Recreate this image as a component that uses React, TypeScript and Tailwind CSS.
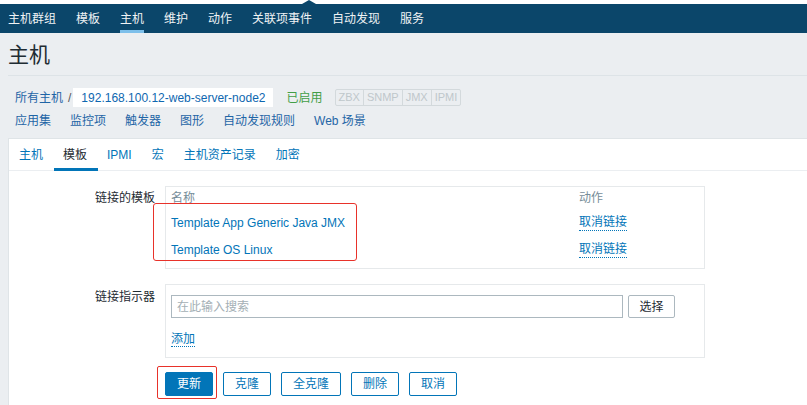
import React from "react";

const navItems = ["主机群组", "模板", "主机", "维护", "动作", "关联项事件", "自动发现", "服务"];
const subLinks = ["应用集", "监控项", "触发器", "图形", "自动发现规则", "Web 场景"];
const tabs = ["主机", "模板", "IPMI", "宏", "主机资产记录", "加密"];
const tags = ["ZBX", "SNMP", "JMX", "IPMI"];
const templates = ["Template App Generic Java JMX", "Template OS Linux"];

export default function App() {
  return (
    <div className="relative h-[405px] w-full overflow-hidden bg-[#ebeef1] text-[12px] text-[#1f2c33] font-['Liberation_Sans','Noto_Sans_CJK_SC',sans-serif]">
      {/* top strip + nav */}
      <div className="h-[4px] bg-white" />
      <svg className="absolute left-[302px] top-0" width="14" height="4" viewBox="0 0 14 4">
        <polygon points="0,4 7,0 14,4" fill="#0b466a" />
      </svg>
      <div className="flex h-[29px] gap-[20px] bg-[#0b466a] px-[8px] text-[#f0f3f5]">
        {navItems.map((n) => (
          <div key={n} className="relative flex h-full items-center">
            {n}
            {n === "主机" && <div className="absolute bottom-0 left-0 h-[3px] w-full bg-[#7dbfea]" />}
          </div>
        ))}
      </div>

      <div className="pl-[8px]">
        {/* title */}
        <div className="h-[43px] border-b border-[#dde3e7] pt-[10px]">
          <h1 className="text-[21px] leading-[24px] text-[#1f2c33]">主机</h1>
        </div>

        {/* breadcrumb */}
        <div className="px-[7px] pt-[12px] pb-[8px]">
          <div className="flex h-[19px] items-center">
            <span className="text-[#1f65a6]">所有主机</span>
            <span className="ml-[5px] mr-[2px] text-[#555]">/</span>
            <span className="flex h-[19px] items-center bg-white px-[8px] text-[#0e67b0]">
              192.168.100.12-web-server-node2
            </span>
            <span className="ml-[13px] text-[#429e47]">已启用</span>
            <div className="ml-[12px] flex h-[17px] rounded-[2px] border border-[#d3d9dc] text-[11px] text-[#bfc7cb]">
              {tags.map((t, i) => (
                <span key={t} className={"flex items-center px-[3px] " + (i > 0 ? "border-l border-[#d3d9dc]" : "")}>
                  {t}
                </span>
              ))}
            </div>
          </div>
          <div className="mt-[5px] flex h-[18px] items-center gap-[19px] text-[#1f65a6]">
            {subLinks.map((s) => (
              <span key={s}>{s}</span>
            ))}
          </div>
        </div>

        {/* card */}
        <div className="h-[300px] border border-r-0 border-[#dfe4e7] bg-white">
          <div className="flex h-[32px] border-b border-[#ebeef1]">
            {tabs.map((t) => (
              <div
                key={t}
                className={"relative flex h-full items-center px-[10px] " + (t === "模板" ? "text-[#1f2c33]" : "text-[#0275b8]")}
              >
                {t}
                {t === "模板" && <div className="absolute bottom-[-1px] left-[1px] right-[-1px] h-[3px] bg-[#0275b8]" />}
              </div>
            ))}
          </div>

          <div className="pt-[15px]">
            {/* linked templates */}
            <div className="flex">
              <div className="w-[146px] pt-[5px] text-right leading-[14px]">链接的模板</div>
              <div className="ml-[10px] w-[540px] border border-[#e6e9eb] px-[5px] pb-[5px]">
                <div className="flex h-[22px] items-center text-[#768d99]">
                  <span className="w-[408px]">名称</span>
                  <span>动作</span>
                </div>
                {templates.map((t) => (
                  <div key={t} className="flex h-[27px] items-center">
                    <span className="w-[408px] text-[#0275b8]">{t}</span>
                    <span className="border-b border-dotted border-[#0275b8] leading-[15px] text-[#0275b8]">取消链接</span>
                  </div>
                ))}
              </div>
            </div>

            {/* link indicator */}
            <div className="mt-[15px] flex">
              <div className="w-[146px] pt-[6px] text-right leading-[14px]">链接指示器</div>
              <div className="ml-[10px] h-[74px] w-[540px] border border-[#e6e9eb] px-[5px] pt-[10px]">
                <div className="flex items-center">
                  <div className="flex h-[23px] w-[452px] items-center border border-[#acb8bf] px-[5px] text-[#a4afb5]">
                    在此输入搜索
                  </div>
                  <button className="ml-[5px] h-[23px] w-[47px] rounded-[2px] border border-[#acb8bf] bg-white text-[#1f2c33]">
                    选择
                  </button>
                </div>
                <div className="mt-[12px]">
                  <span className="border-b border-dotted border-[#0275b8] leading-[15px] text-[#0275b8]">添加</span>
                </div>
              </div>
            </div>

            {/* buttons */}
            <div className="ml-[156px] mt-[14px] flex gap-[10px]">
              <button className="h-[24px] rounded-[2px] border border-[#0275b8] bg-[#0275b8] px-[11px] text-white">更新</button>
              {["克隆", "全克隆", "删除", "取消"].map((b) => (
                <button key={b} className="h-[24px] rounded-[2px] border border-[#0275b8] bg-white px-[11px] text-[#0275b8]">
                  {b}
                </button>
              ))}
            </div>
          </div>
        </div>
      </div>

      {/* red annotation boxes */}
      <div className="absolute left-[153px] top-[203px] h-[58px] w-[204px] rounded-[3px] border border-[#e8322a]" />
      <div className="absolute left-[157px] top-[366px] h-[33px] w-[60px] rounded-[2px] border border-[#e8322a]" />
    </div>
  );
}
